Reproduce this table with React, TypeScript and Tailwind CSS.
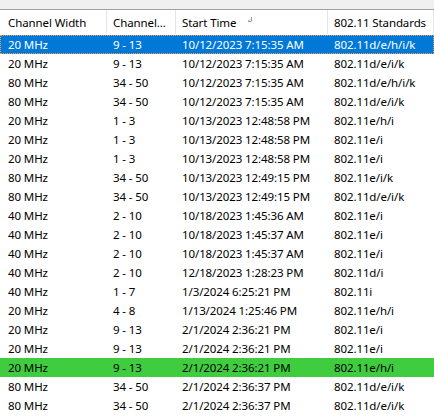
import React from "react";

type Row = { w: string; c: string; t: string; s: string; hl?: "blue" | "green" };

const rows: Row[] = [
  { w: "20 MHz", c: "9 - 13", t: "10/12/2023 7:15:35 AM", s: "802.11d/e/h/i/k", hl: "blue" },
  { w: "20 MHz", c: "9 - 13", t: "10/12/2023 7:15:35 AM", s: "802.11d/e/i/k" },
  { w: "80 MHz", c: "34 - 50", t: "10/12/2023 7:15:35 AM", s: "802.11d/e/h/i/k" },
  { w: "80 MHz", c: "34 - 50", t: "10/12/2023 7:15:35 AM", s: "802.11d/e/i/k" },
  { w: "20 MHz", c: "1 - 3", t: "10/13/2023 12:48:58 PM", s: "802.11e/h/i" },
  { w: "20 MHz", c: "1 - 3", t: "10/13/2023 12:48:58 PM", s: "802.11e/i" },
  { w: "20 MHz", c: "1 - 3", t: "10/13/2023 12:48:58 PM", s: "802.11e/i" },
  { w: "80 MHz", c: "34 - 50", t: "10/13/2023 12:49:15 PM", s: "802.11e/i/k" },
  { w: "80 MHz", c: "34 - 50", t: "10/13/2023 12:49:15 PM", s: "802.11d/e/i/k" },
  { w: "40 MHz", c: "2 - 10", t: "10/18/2023 1:45:36 AM", s: "802.11e/i" },
  { w: "40 MHz", c: "2 - 10", t: "10/18/2023 1:45:37 AM", s: "802.11e/i" },
  { w: "40 MHz", c: "2 - 10", t: "10/18/2023 1:45:37 AM", s: "802.11e/i" },
  { w: "40 MHz", c: "2 - 10", t: "12/18/2023 1:28:23 PM", s: "802.11d/i" },
  { w: "40 MHz", c: "1 - 7", t: "1/3/2024 6:25:21 PM", s: "802.11i" },
  { w: "20 MHz", c: "4 - 8", t: "1/13/2024 1:25:46 PM", s: "802.11e/h/i" },
  { w: "20 MHz", c: "9 - 13", t: "2/1/2024 2:36:21 PM", s: "802.11e/i" },
  { w: "20 MHz", c: "9 - 13", t: "2/1/2024 2:36:21 PM", s: "802.11e/i" },
  { w: "20 MHz", c: "9 - 13", t: "2/1/2024 2:36:21 PM", s: "802.11e/h/i", hl: "green" },
  { w: "80 MHz", c: "34 - 50", t: "2/1/2024 2:36:37 PM", s: "802.11d/e/i/k" },
  { w: "80 MHz", c: "34 - 50", t: "2/1/2024 2:36:37 PM", s: "802.11d/e/i/k" },
];

const grid = "grid grid-cols-[107px_69px_152px_106px]";

export default function App() {
  return (
    <div
      className="w-[434px] h-[417px] bg-white overflow-hidden text-[11.5px] tracking-[-0.1px] text-black"
      style={{ fontFamily: '"Noto Sans", "Open Sans", sans-serif' }}
    >
      <div className="h-[9px] bg-[#f0f0f0] border-b border-[#a0a0a0] box-content" />
      <div className={`${grid} h-[24px] items-center`}>
        <div className="pl-[8px] pt-[2px] border-r border-[#e5e5e5] h-full flex items-center">Channel Width</div>
        <div className="pl-[6px] pt-[2px] border-r border-[#e5e5e5] h-full flex items-center">Channel…</div>
        <div className="pl-[6px] pt-[2px] border-r border-[#e5e5e5] h-full flex items-center relative">
          Start Time
          <svg className="absolute left-[70px] top-[6px]" width="8" height="8" viewBox="0 0 8 8">
            <path d="M5.5 1 L5.5 5 M2 5.5 L5.5 5.5 M2.5 5 L4 3.5" stroke="#9a9a9a" strokeWidth="1" fill="none" />
          </svg>
        </div>
        <div className="pl-[6px] pt-[2px] border-r border-[#e5e5e5] h-full flex items-center">802.11 Standards</div>
      </div>
      <div className="flex flex-col pt-[1px]">
        {rows.map((r, i) => {
          const bg =
            r.hl === "blue"
              ? "bg-[#0078d7] text-white outline-1 outline-dotted outline-[#f0a050] -outline-offset-1"
              : r.hl === "green"
              ? "bg-[#3fcc3f]"
              : "";
          return (
            <div key={i} className={`${grid} h-[19px] items-center whitespace-nowrap ${bg}`}>
              <div className="pl-[8px]">{r.w}</div>
              <div className="pl-[6px]">{r.c}</div>
              <div className="pl-[6px]">{r.t}</div>
              <div className="pl-[6px]">{r.s}</div>
            </div>
          );
        })}
      </div>
    </div>
  );
}
